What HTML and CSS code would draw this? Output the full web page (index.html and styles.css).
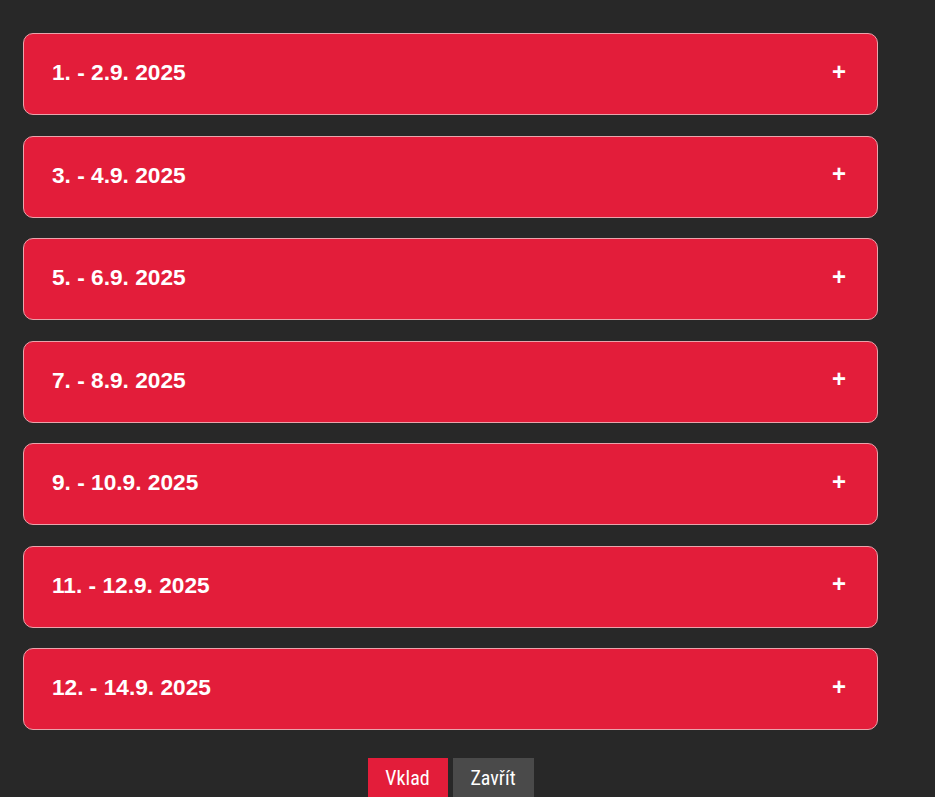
FILE: index.html
```html
<!DOCTYPE html>
<html lang="cs">
<head>
<meta charset="utf-8">
<title>Termíny</title>
<link rel="stylesheet" href="styles.css">
</head>
<body>
<div class="wrap">
  <div class="list">
    <div class="item"><span class="label">1. - 2.9. 2025</span><span class="plus">+</span></div>
    <div class="item"><span class="label">3. - 4.9. 2025</span><span class="plus">+</span></div>
    <div class="item"><span class="label">5. - 6.9. 2025</span><span class="plus">+</span></div>
    <div class="item"><span class="label">7. - 8.9. 2025</span><span class="plus">+</span></div>
    <div class="item"><span class="label">9. - 10.9. 2025</span><span class="plus">+</span></div>
    <div class="item"><span class="label">11. - 12.9. 2025</span><span class="plus">+</span></div>
    <div class="item"><span class="label">12. - 14.9. 2025</span><span class="plus">+</span></div>
  </div>
  <div class="actions">
    <button class="btn btn-red">Vklad</button>
    <button class="btn btn-grey">Zavřít</button>
  </div>
</div>
</body>
</html>
```
FILE: styles.css
```css
html, body {
  margin: 0;
  padding: 0;
  background: #282828;
}
body {
  font-family: "Liberation Sans", Arial, sans-serif;
  overflow: hidden;
}
.wrap {
  width: 855px;
  padding: 33px 0 0 23px;
}
.list {
  display: flex;
  flex-direction: column;
  gap: 20.5px;
}
.item {
  box-sizing: border-box;
  height: 82px;
  background: #e31d3a;
  border: 1px solid #e9a3ab;
  border-radius: 10px;
  padding: 0 31px 0 28px;
  display: flex;
  align-items: center;
  justify-content: space-between;
  color: #fff;
}
.label {
  font-size: 22.7px;
  font-weight: bold;
  padding-bottom: 3px;
}
.plus {
  font-size: 24px;
  font-weight: bold;
  line-height: 1;
  padding-bottom: 5px;
}
.actions {
  display: flex;
  justify-content: center;
  gap: 5px;
  margin-top: 28px;
}
.btn {
  border: 0;
  margin: 0;
  height: 44px;
  width: 80px;
  color: #fff;
  font-family: "Roboto Condensed", "DejaVu Sans Condensed", Roboto, sans-serif;
  font-stretch: 80%;
  font-size: 20px;
  padding: 0;
  padding-bottom: 4px;
}
.btn-red { background: #e31d3a; }
.btn-grey { background: #4a4a4a; width: 81px; }
```
